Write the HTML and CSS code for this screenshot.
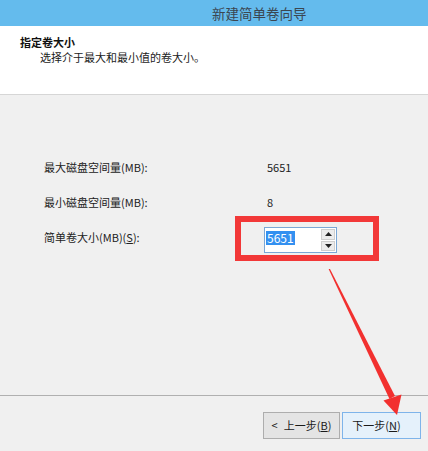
FILE: index.html
```html
<!DOCTYPE html>
<html lang="zh-CN">
<head>
<meta charset="utf-8">
<title>新建简单卷向导</title>
<link rel="stylesheet" href="styles.css">
</head>
<body>
<div class="win">
  <div class="titlebar"><span class="title">新建简单卷向导</span></div>
  <div class="header">
    <div class="h-title">指定卷大小</div>
    <div class="h-sub">选择介于最大和最小值的卷大小。</div>
  </div>
  <div class="content">
    <div class="grid">
      <div class="label">最大磁盘空间量(MB):</div>
      <div class="value">5651</div>
      <div class="label">最小磁盘空间量(MB):</div>
      <div class="value">8</div>
      <div class="label">简单卷大小(MB)(<u>S</u>):</div>
      <div class="spin">
        <div class="spin-field"><span class="sel">5651</span></div>
        <div class="spin-btns">
          <div class="spin-btn"><svg width="7" height="4" viewBox="0 0 7 4"><path d="M3.5 0 L7 4 L0 4 Z" fill="#222"/></svg></div>
          <div class="spin-btn"><svg width="7" height="4" viewBox="0 0 7 4"><path d="M0 0 L7 0 L3.5 4 Z" fill="#222"/></svg></div>
        </div>
      </div>
    </div>
  </div>
  <div class="footer">
    <button class="btn"><span class="lt">&lt;</span>上一步(<u>B</u>)</button>
    <button class="btn btn-default"><span class="next">下一步(<u>N</u>)</span></button>
  </div>
  <div class="redbox"></div>
  <svg class="arrow" width="428" height="451" viewBox="0 0 428 451">
    <polygon points="328.6,269 330,269 395,396 389.5,399" fill="#f2302f"/>
    <polygon points="383.5,400.5 401.5,394.5 397,415" fill="#f2302f"/>
  </svg>
</div>
</body>
</html>
```

FILE: styles.css
```css
* { box-sizing: border-box; }
html, body { margin: 0; padding: 0; }
body {
  width: 428px;
  height: 451px;
  overflow: hidden;
  background: #f0f0f0;
  font-family: "Noto Sans CJK SC", "Noto Sans", sans-serif;
  font-size: 11px;
  color: #1a1a1a;
}
.win {
  position: relative;
  width: 428px;
  height: 451px;
  display: flex;
  flex-direction: column;
}
.titlebar {
  height: 26px;
  background: #64bbed;
  display: flex;
  align-items: center;
  padding-left: 212px;
}
.title {
  font-size: 13.5px;
  color: #3b4650;
  line-height: 26px;
}
.header {
  height: 69px;
  background: #ffffff;
  border-bottom: 1px solid #d6d6d6;
  padding: 9px 0 0 20px;
  line-height: 15px;
}
.h-title { font-weight: bold; color: #111; }
.h-sub { padding-left: 20px; color: #1a1a1a; }
.content {
  height: 300px;
  padding: 62px 0 0 44px;
}
.grid {
  display: grid;
  grid-template-columns: 220px 80px;
  grid-auto-rows: 20px;
  row-gap: 15px;
  align-items: start;
}
.label { line-height: 20px; color: #222; }
.value { line-height: 20px; padding-left: 3px; color: #222; }
.spin {
  width: 73px;
  height: 26px;
  border: 1px solid #7aa7d6;
  background: #fff;
  display: flex;
}
.spin-field {
  flex: 1;
  padding: 2px 0 0 1px;
}
.sel {
  display: inline-block;
  background: #3390f0;
  color: #fff;
  line-height: 14px;
  height: 14px;
  padding: 0 1px 0 1px;
  font-size: 12px;
}
.spin-btns {
  width: 15px;
  display: flex;
  flex-direction: column;
  padding: 1px 1px 1px 0;
  gap: 1px;
}
.spin-btn {
  flex: 1;
  background: #ececec;
  border: 1px solid #cfcfcf;
  display: flex;
  align-items: center;
  justify-content: center;
}
.footer {
  flex: 1;
  border-top: 1px solid #b0b0b0;
  display: flex;
  justify-content: flex-end;
  align-items: flex-start;
  padding: 16px 7px 0 0;
  gap: 2px;
}
.btn {
  font-family: inherit;
  font-size: 11px;
  color: #1a1a1a;
  width: 77px;
  height: 27px;
  background: #e4e4e4;
  border: 1px solid #adadad;
  padding: 0;
  line-height: 25px;
}
.lt { margin-right: 6px; }
.next { position: relative; left: -5px; }
.btn-default {
  width: 79px;
  background: #e5f1fb;
  border: 1px solid #7eb4ea;
}
.redbox {
  position: absolute;
  left: 235px;
  top: 216px;
  width: 144px;
  height: 45px;
  border: 6px solid #f23838;
  pointer-events: none;
}
.arrow {
  position: absolute;
  left: 0;
  top: 0;
  pointer-events: none;
}
```
